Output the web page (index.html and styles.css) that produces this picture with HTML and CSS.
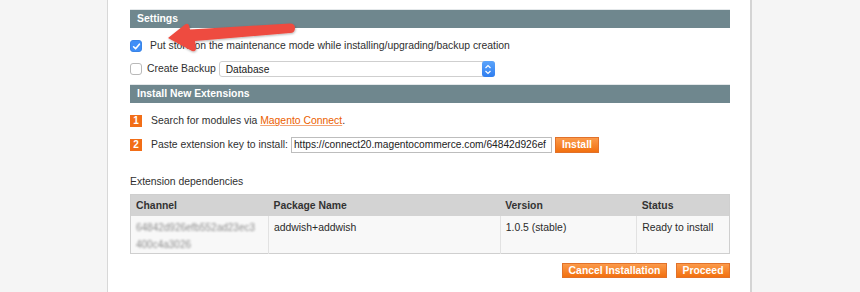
FILE: index.html
```html
<!DOCTYPE html>
<html>
<head>
<meta charset="utf-8">
<link rel="stylesheet" href="styles.css">
</head>
<body>
<div class="page">
  <div class="section-head">Settings</div>
  <div class="row row-first">
    <span class="cb cb-checked"><svg width="11" height="11" viewBox="0 0 11 11"><path d="M2.6 5.8 L4.6 7.8 L8.4 3.2" fill="none" stroke="#fff" stroke-width="1.6" stroke-linecap="round" stroke-linejoin="round"/></svg></span>
    <span class="label">Put store on the maintenance mode while installing/upgrading/backup creation</span>
  </div>
  <div class="row row-second">
    <span class="cb"></span>
    <span class="label">Create Backup</span>
    <div class="select">
      <span class="select-text">Database</span>
      <span class="select-btn"><svg width="8" height="11" viewBox="0 0 8 11"><path d="M1.5 4 L4 1.6 L6.5 4 M1.5 7 L4 9.4 L6.5 7" fill="none" stroke="#fff" stroke-width="1.2"/></svg></span>
    </div>
  </div>
  <div class="section-head">Install New Extensions</div>
  <div class="step step-first">
    <span class="num">1</span>
    <span class="label">Search for modules via <a class="link">Magento Connect</a>.</span>
  </div>
  <div class="step step-second">
    <span class="num">2</span>
    <span class="label">Paste extension key to install:</span>
    <div class="key-input">https://connect20.magentocommerce.com/64842d926ef</div>
    <span class="btn btn-install">Install</span>
  </div>
  <div class="deps-title">Extension dependencies</div>
  <table class="deps">
    <thead>
      <tr>
        <th class="c1">Channel</th>
        <th class="c2">Package Name</th>
        <th class="c3">Version</th>
        <th class="c4">Status</th>
      </tr>
    </thead>
    <tbody>
      <tr>
        <td class="c1"><span class="blur">64842d926efb552ad23ec3<br>400c4a3026</span></td>
        <td class="c2">addwish+addwish</td>
        <td class="c3">1.0.5 (stable)</td>
        <td class="c4">Ready to install</td>
      </tr>
    </tbody>
  </table>
  <div class="actions">
    <span class="btn btn-cancel">Cancel Installation</span>
    <span class="btn btn-proceed">Proceed</span>
  </div>
</div>
<svg class="arrow" width="200" height="60" viewBox="0 0 200 60">
  <defs>
    <filter id="sh" x="-10%" y="-30%" width="130%" height="160%">
      <feDropShadow dx="0.5" dy="1" stdDeviation="1" flood-color="#000" flood-opacity="0.3"/>
    </filter>
  </defs>
  <path filter="url(#sh)" fill="#ee4b3f" d="M18 36 L35 22.5 Q38 20.5 39 23.5 L40 27.5 L140 21.5 Q145 21.5 145 26 Q145 31 140 31 L45 39 L46 46 Q46 50 42 49 Z"/>
</svg>
</body>
</html>
```
FILE: styles.css
```css
html, body {
  margin: 0;
  padding: 0;
}
body {
  background: #f5f5f5;
  font-family: "Liberation Sans", Arial, sans-serif;
  font-size: 10.4px;
  color: #2f2f2f;
  width: 860px;
  height: 292px;
  overflow: hidden;
  position: relative;
}
.page {
  margin-left: 107px;
  width: 600px;
  height: 292px;
  background: #fff;
  border-left: 1px solid #d8d8d8;
  border-right: 2px solid #d4d4d4;
  padding: 9px 20px 0 22px;
  box-sizing: content-box;
}
.section-head {
  height: 18px;
  line-height: 18px;
  background: #6f878e;
  color: #fff;
  font-weight: bold;
  font-size: 10.4px;
  padding-left: 7px;
  border-top: 1px solid #e4e8ea;
}
.row {
  display: flex;
  align-items: center;
  height: 16px;
}
.row-first {
  margin-top: 10px;
}
.row-second {
  margin-top: 7px;
  margin-bottom: 7px;
}
.cb {
  width: 10px;
  height: 10px;
  border: 1px solid #b9b9b9;
  border-radius: 3px;
  background: #fff;
  box-sizing: content-box;
  display: flex;
  margin-right: 5px;
  flex: none;
}
.cb-checked {
  background: #3e8ef7;
  border-color: #3a84e6;
  margin-right: 8px;
}
.cb-checked svg {
  margin: -0.5px;
}
.label {
  white-space: nowrap;
  line-height: 16px;
}
.link {
  color: #eb5e00;
  text-decoration: underline;
  text-decoration-color: #f3a576;
}
.select {
  margin-left: 3px;
  width: 276px;
  border: 1px solid #cfcfcf;
  border-radius: 3px;
  display: flex;
  align-items: center;
  justify-content: space-between;
  box-sizing: border-box;
  height: 16px;
}
.select-text {
  font-size: 10.2px;
  padding-left: 6px;
  color: #222;
}
.select-btn {
  width: 13px;
  height: 16px;
  margin-right: -1px;
  background: linear-gradient(#5ba4fb, #2f7ef0);
  border-radius: 3px;
  display: flex;
  align-items: center;
  justify-content: center;
}
.step {
  display: flex;
  align-items: center;
  height: 16px;
}
.step-first {
  margin-top: 10px;
}
.step-second {
  margin-top: 8px;
}
.num {
  width: 12px;
  height: 12px;
  background: #f26e17;
  color: #fff;
  font-weight: bold;
  font-size: 10px;
  line-height: 12px;
  text-align: center;
  margin-right: 9px;
  flex: none;
}
.key-input {
  margin-left: 3px;
  width: 261px;
  height: 16px;
  border: 1px solid #bdbdbd;
  box-sizing: border-box;
  font-size: 10.2px;
  line-height: 14px;
  padding-left: 2px;
  overflow: hidden;
  white-space: nowrap;
  color: #222;
}
.btn {
  display: inline-block;
  background: linear-gradient(#fb9a4a, #f2700f);
  border: 1px solid #e1712a;
  color: #fff;
  font-weight: bold;
  font-size: 10.4px;
  text-align: center;
  box-sizing: border-box;
  white-space: nowrap;
}
.btn-install {
  margin-left: 3px;
  width: 44px;
  height: 16px;
  line-height: 14px;
}
.deps-title {
  margin-top: 22px;
  line-height: 14px;
}
.deps {
  margin-top: 5px;
  width: 600px;
  border-collapse: collapse;
  border: 1px solid #cfcfcf;
  table-layout: fixed;
}
.deps th {
  background: #d3d3d3;
  text-align: left;
  font-weight: bold;
  height: 21px;
  padding: 0 5px;
  color: #333;
}
.deps td {
  background: #f8f8f8;
  vertical-align: top;
  height: 34px;
  padding: 3px 5px 0;
  border-left: 1px solid #e2e2e2;
  line-height: 17px;
  color: #2a2a2a;
  box-sizing: border-box;
}
.deps td:first-child {
  border-left: none;
}
.c1 { width: 127px; }
.c2 { width: 221px; }
.c3 { width: 126px; }
.c4 { width: 82px; }
.blur {
  filter: blur(1.2px);
  color: #8c8c8c;
  font-size: 10px;
  line-height: 17px;
  display: block;
  white-space: nowrap;
}
.actions {
  display: flex;
  justify-content: flex-end;
  gap: 9px;
  margin-top: 9px;
}
.btn-cancel {
  width: 105px;
  height: 15px;
  line-height: 13px;
}
.btn-proceed {
  width: 54px;
  height: 15px;
  line-height: 13px;
}
.arrow {
  position: absolute;
  left: 150px;
  top: 2px;
}
```
